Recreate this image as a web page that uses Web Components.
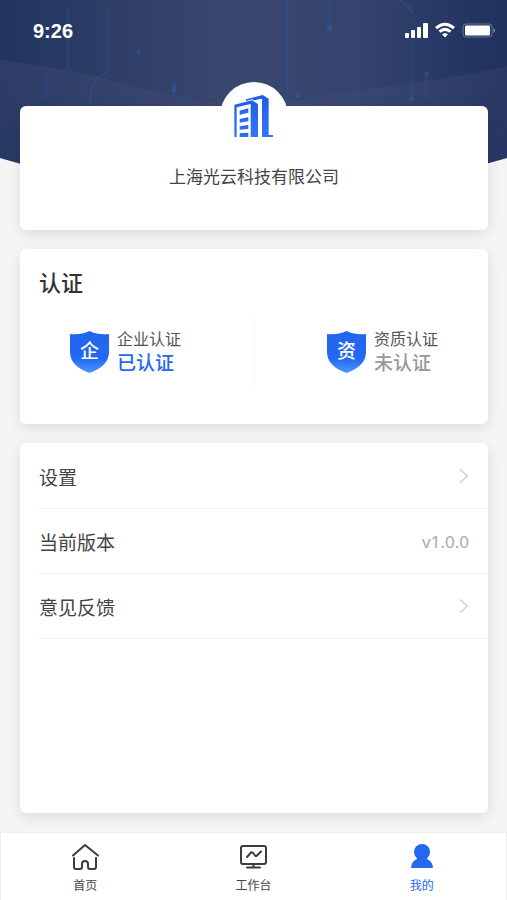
<!DOCTYPE html>
<html lang="zh-CN">
<head>
  <meta charset="utf-8">
  <meta name="viewport" content="width=device-width, initial-scale=1">
  <title>我的</title>
  <style>
    body {
      margin: 0;
      background: #f5f5f5;
      color: #444;
      font-family: "Liberation Sans", "Noto Sans CJK SC", sans-serif;
    }
  </style>
</head>
<body>
  <profile-page>
    <status-bar slot="status" time="9:26"></status-bar>
    <company-card name="上海光云科技有限公司"></company-card>
    <cert-card heading="认证">
      <cert-item mark="企" label="企业认证" status="已认证" done></cert-item>
      <cert-item mark="资" label="资质认证" status="未认证"></cert-item>
    </cert-card>
    <menu-card>
      <menu-row label="设置"></menu-row>
      <menu-row label="当前版本" value="v1.0.0"></menu-row>
      <menu-row label="意见反馈"></menu-row>
    </menu-card>
    <tab-bar slot="tabs">
      <tab-item icon="home" label="首页"></tab-item>
      <tab-item icon="work" label="工作台"></tab-item>
      <tab-item icon="user" label="我的" active></tab-item>
    </tab-bar>
  </profile-page>

  <script>
    const cardStyle = `
      :host {
        display: block;
        box-sizing: border-box;
        background: #fff;
        border-radius: 6px;
        box-shadow: 0 4px 14px rgba(0, 0, 0, .1);
      }
    `;

    function render(el, html) {
      const template = document.createElement("template");
      template.innerHTML = html;
      const shadow = el.attachShadow({ mode: "open" });
      shadow.appendChild(template.content.cloneNode(true));
    }

    class ProfilePage extends HTMLElement {
      constructor() {
        super();
        render(this, `
          <style>
            :host {
              position: relative;
              display: flex;
              flex-direction: column;
              min-height: 100vh;
            }
            .backdrop {
              position: absolute;
              top: 0;
              left: 0;
              width: 100%;
              height: 200px;
            }
            main {
              position: relative;
              flex: 1;
              display: flex;
              flex-direction: column;
              gap: 19px;
              padding: 44px 19px 19px 20px;
            }
            ::slotted(menu-card) {
              flex: 1;
            }
          </style>
          <svg class="backdrop" viewBox="0 0 507 200" preserveAspectRatio="none" aria-hidden="true">
            <defs>
              <linearGradient id="sky" x1="0" y1="0" x2="1" y2="0">
                <stop offset="0" stop-color="#21355f"/>
                <stop offset=".45" stop-color="#3a476f"/>
                <stop offset=".7" stop-color="#34446e"/>
                <stop offset="1" stop-color="#20305f"/>
              </linearGradient>
              <linearGradient id="haze" x1="0" y1="0" x2="0" y2="1">
                <stop offset="0" stop-color="#5a5a86" stop-opacity=".2"/>
                <stop offset="1" stop-color="#2c3968" stop-opacity=".3"/>
              </linearGradient>
            </defs>
            <path fill="url(#sky)" d="M0 0H507V158Q253 234 0 158Z"/>
            <path fill="url(#haze)" d="M0 60Q70 68 130 85T253 106Q330 95 400 85T507 66V158Q253 234 0 158Z"/>
            <g fill="none" stroke="#2a5599" stroke-opacity=".3" stroke-width="3">
              <path d="M68 8V70M108 10V66Q108 74 98 78Q90 82 90 106M46 76V98"/>
              <path d="M287 0V104M329 0V26M412 40V98M426 75V98M398 0Q412 6 412 14"/>
              <path stroke-opacity=".1" d="M180 40V104M190 10V100"/>
            </g>
            <g fill="#285ba0" fill-opacity=".7">
              <path d="M136 54L139 47L141 54ZM172 84H176V91L172 94ZM326 31L329 25H332V31Z"/>
              <path fill-opacity=".5" d="M424 72H429V76H424ZM409 97H414V101H409Z"/>
              <path fill="#404aa0" d="M296 94H301V98H296Z"/>
            </g>
          </svg>
          <slot name="status"></slot>
          <main><slot></slot></main>
          <slot name="tabs"></slot>
        `);
      }
    }

    class StatusBar extends HTMLElement {
      connectedCallback() {
        render(this, `
          <style>
            :host {
              position: relative;
              display: flex;
              align-items: center;
              justify-content: space-between;
              box-sizing: border-box;
              height: 62px;
              padding: 0 11px 0 33px;
              color: #fff;
              font-size: 20px;
              font-weight: bold;
            }
            svg {
              display: block;
            }
          </style>
          <time>${this.getAttribute("time")}</time>
          <svg width="92" height="18" viewBox="0 0 92 18" fill="#fff" aria-hidden="true">
            <rect x="1" y="11" width="4" height="5" rx="1"/>
            <rect x="7" y="8" width="4" height="8" rx="1"/>
            <rect x="13" y="5" width="4" height="11" rx="1"/>
            <rect x="19" y="1" width="5" height="15" rx="1"/>
            <g fill="none" stroke="#fff" stroke-width="3">
              <path d="M32 6.200Q41 -1.800 50 6.200"/>
              <path d="M35.500 9.700Q41 5 46.500 9.700"/>
            </g>
            <path d="M38 12.300Q41 10 44 12.300L41 15.500Z"/>
            <rect x="59" y="2" width="29" height="13" rx="3" fill="none" stroke="#fff" stroke-opacity=".3"/>
            <rect x="61" y="3.500" width="25" height="10" rx="1"/>
            <path d="M89.500 6V11Q91 10 91 8.500T89.500 6Z" fill-opacity=".5"/>
          </svg>
        `);
      }
    }

    class CompanyCard extends HTMLElement {
      connectedCallback() {
        render(this, `
          <style>
            ${cardStyle}
            :host {
              position: relative;
              padding: 58px 20px 38px;
              text-align: center;
            }
            .logo {
              position: absolute;
              top: -24px;
              left: 50%;
              width: 68px;
              height: 68px;
              margin-left: -34px;
              border-radius: 50%;
              background: #fff;
            }
            .logo svg {
              display: block;
              margin: 10px;
            }
            h1 {
              margin: 0;
              font-size: 17px;
              font-weight: normal;
              line-height: 28px;
            }
          </style>
          <div class="logo">
            <svg width="48" height="48" viewBox="0 0 144 144" aria-hidden="true">
              <defs>
                <linearGradient id="tower" x1="0" y1="0" x2="0" y2="1">
                  <stop offset="0" stop-color="#1f5ee6"/>
                  <stop offset="1" stop-color="#3277fb"/>
                </linearGradient>
              </defs>
              <g fill="url(#tower)">
                <path d="M13 38L66 25L84 36V135H62V36L20 46V135H13Z"/>
                <path d="M29 56L55 49V62L29 69Z"/>
                <path d="M29 81L55 76V88L29 92Z"/>
                <path d="M29 103L55 99V111L29 113Z"/>
                <path d="M29 124L55 122V135H29Z"/>
                <path d="M48 27V22L98 9L116 20V129H129V135H96V20L72 25L66 22Z"/>
              </g>
            </svg>
          </div>
          <h1>${this.getAttribute("name")}</h1>
        `);
      }
    }

    class CertCard extends HTMLElement {
      connectedCallback() {
        render(this, `
          <style>
            ${cardStyle}
            :host {
              padding: 21px 19px 36px;
            }
            h2 {
              margin: 0 0 18px;
              color: #333;
              font-size: 22px;
              font-weight: 500;
              line-height: 28px;
            }
            .items {
              display: flex;
              align-items: center;
              justify-content: space-between;
              padding: 0 31px;
              min-height: 72px;
              background: linear-gradient(#f8f8f8, #f8f8f8) center / 1px 100% no-repeat;
            }
          </style>
          <h2>${this.getAttribute("heading")}</h2>
          <div class="items"><slot></slot></div>
        `);
      }
    }

    class CertItem extends HTMLElement {
      connectedCallback() {
        render(this, `
          <style>
            :host {
              display: block;
            }
            a {
              display: flex;
              align-items: center;
              gap: 8px;
              color: #555;
              font-size: 16px;
              line-height: 24px;
              text-decoration: none;
            }
            .shield {
              display: grid;
              place-items: center;
            }
            .shield > * {
              grid-area: 1 / 1;
            }
            .mark {
              color: #fff;
              font-size: 19px;
              font-weight: 500;
            }
            .label, .status {
              display: block;
            }
            .status {
              color: #999;
              font-size: 19px;
              font-weight: 500;
            }
            :host([done]) .status {
              color: #2468f2;
            }
          </style>
          <a href="#cert">
            <span class="shield">
              <svg width="39" height="42" viewBox="0 0 39 42" aria-hidden="true">
                <defs>
                  <linearGradient id="fill" x1="0" y1="0" x2="0" y2="1">
                    <stop offset="0" stop-color="#2264ee"/>
                    <stop offset=".65" stop-color="#2468f2"/>
                    <stop offset="1" stop-color="#4a97ff"/>
                  </linearGradient>
                </defs>
                <path fill="url(#fill)" d="M0 3Q11 4 19.500 0Q28 4 39 3V21Q39 35 19.500 42Q0 35 0 21Z"/>
              </svg>
              <span class="mark">${this.getAttribute("mark")}</span>
            </span>
            <span>
              <span class="label">${this.getAttribute("label")}</span>
              <span class="status">${this.getAttribute("status")}</span>
            </span>
          </a>
        `);
      }
    }

    class MenuCard extends HTMLElement {
      constructor() {
        super();
        render(this, `
          <style>
            ${cardStyle}
            :host {
              padding: 1px 0 0 19px;
            }
          </style>
          <slot></slot>
        `);
      }
    }

    class MenuRow extends HTMLElement {
      connectedCallback() {
        const label = this.getAttribute("label");
        const value = this.getAttribute("value");
        const chevron = `
          <svg width="10" height="16" viewBox="0 0 10 16" fill="none" stroke="#d0d0d0" stroke-width="1.500" aria-hidden="true">
            <path d="M1 1.500L8.500 8L1 14.500"/>
          </svg>`;

        render(this, `
          <style>
            :host {
              display: block;
              border-bottom: 1px solid #f4f4f4;
            }
            .row {
              display: flex;
              align-items: center;
              justify-content: space-between;
              box-sizing: border-box;
              width: 100%;
              min-height: 64px;
              padding: 0 19px 0 0;
              border: none;
              background: none;
              color: inherit;
              font: inherit;
              font-size: 19px;
              text-align: left;
            }
            .value {
              color: #aaa;
              font-family: "Noto Sans", sans-serif;
              font-size: 17px;
            }
          </style>
          ${value
            ? `<div class="row"><span>${label}</span><span class="value">${value}</span></div>`
            : `<button class="row" type="button"><span>${label}</span>${chevron}</button>`}
        `);
      }
    }

    class TabBar extends HTMLElement {
      constructor() {
        super();
        render(this, `
          <style>
            :host {
              position: relative;
              display: block;
              background: #fff;
              border: 1px solid #eee;
              border-bottom: none;
            }
            nav {
              display: grid;
              grid-template-columns: repeat(3, 1fr);
            }
          </style>
          <nav><slot></slot></nav>
        `);
      }
    }

    const tabIcons = {
      home: `
        <g fill="none" stroke="#3c3c3c" stroke-width="2" stroke-linecap="round" stroke-linejoin="round">
          <path d="M3 12.500L15 2L28 12.500"/>
          <path d="M4 15V24Q4 26 6 26H10Q12 26 12 24V21Q12 18 15 18T18 21V24Q18 26 20 26H24Q26 26 26 24V15"/>
        </g>`,
      work: `
        <g fill="none" stroke="#3c3c3c" stroke-width="2" stroke-linecap="round" stroke-linejoin="round">
          <rect x="3" y="3" width="25" height="18" rx="2"/>
          <path d="M9 14L13 9.500Q14 9 15 10L17 12.500Q18 13.500 19 12.500L23 8.500"/>
          <path d="M15.500 21V24.500M9 24.500H22"/>
        </g>`,
      user: `
        <g fill="#2468f2">
          <circle cx="15" cy="9" r="8"/>
          <path d="M10 14H20V16Q25 18 26 24Q26 25 25 25H5Q4 25 4 24Q5 18 10 16Z"/>
        </g>`
    };

    class TabItem extends HTMLElement {
      connectedCallback() {
        render(this, `
          <style>
            :host {
              display: block;
            }
            a {
              display: flex;
              flex-direction: column;
              align-items: center;
              gap: 5px;
              padding: 10px 0 4px;
              color: #444;
              font-size: 12px;
              line-height: 20px;
              text-decoration: none;
            }
            :host([active]) a {
              color: #2468f2;
            }
          </style>
          <a href="#${this.getAttribute("icon")}">
            <svg width="30" height="28" viewBox="0 0 30 28" aria-hidden="true">
              ${tabIcons[this.getAttribute("icon")]}
            </svg>
            <span>${this.getAttribute("label")}</span>
          </a>
        `);
      }
    }

    customElements.define("profile-page", ProfilePage);
    customElements.define("status-bar", StatusBar);
    customElements.define("company-card", CompanyCard);
    customElements.define("cert-card", CertCard);
    customElements.define("cert-item", CertItem);
    customElements.define("menu-card", MenuCard);
    customElements.define("menu-row", MenuRow);
    customElements.define("tab-bar", TabBar);
    customElements.define("tab-item", TabItem);
  </script>
</body>
</html>
